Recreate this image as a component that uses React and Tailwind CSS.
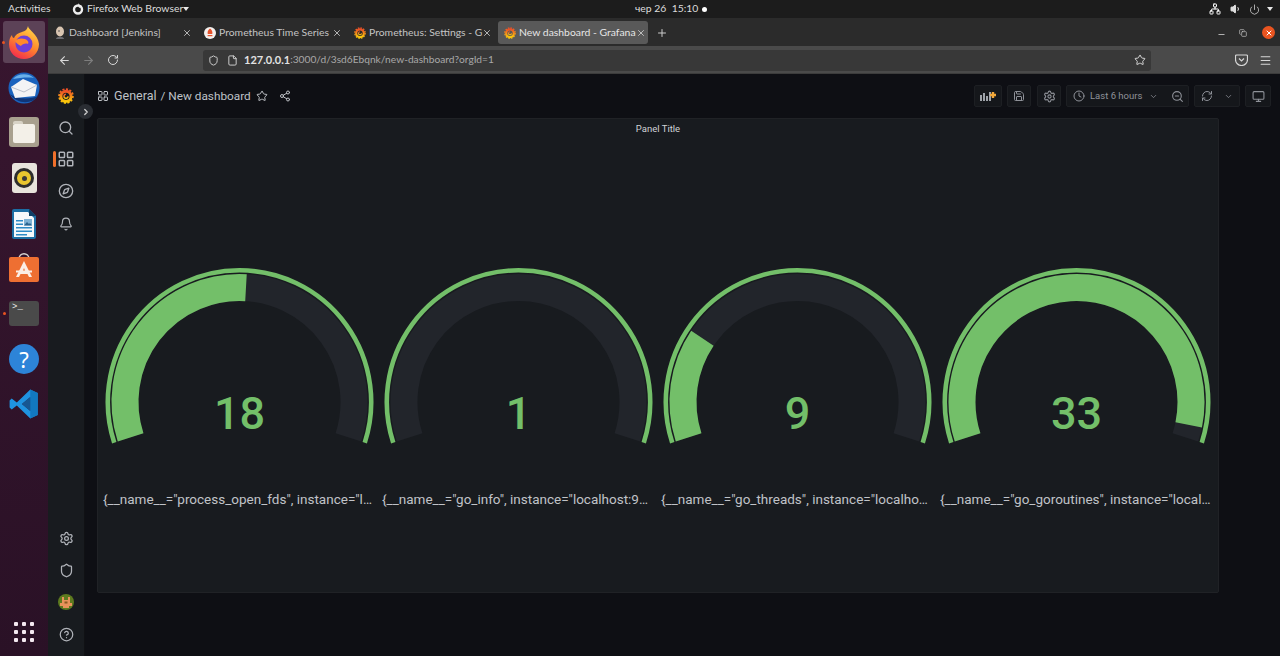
import {
  ArrowLeft, ArrowRight, RotateCw, Shield, File, Star, Menu, X, Plus, Minus, Search, LayoutGrid,
  Compass, Bell, Settings, CircleHelp, Share2, Save, Clock, ChevronDown, ZoomOut, RefreshCw,
  Monitor, ChevronRight, Network, Volume1, Power, Copy,
} from 'lucide-react';

const gauges = [
  { value: '18', pct: 0.515, label: '{__name__="process_open_fds", instance="localhost:9090", job="prometheus"}' },
  { value: '1', pct: 0, label: '{__name__="go_info", instance="localhost:9090", job="prometheus", version="go1.16"}' },
  { value: '9', pct: 0.24, label: '{__name__="go_threads", instance="localhost:9090", job="prometheus"}' },
  { value: '33', pct: 0.97, label: '{__name__="go_goroutines", instance="localhost:9090", job="prometheus"}' },
];

function arc(cx, cy, r, from, to) {
  const rad = (a) => (a * Math.PI) / 180;
  const x1 = cx + r * Math.cos(rad(from));
  const y1 = cy - r * Math.sin(rad(from));
  const x2 = cx + r * Math.cos(rad(to));
  const y2 = cy - r * Math.sin(rad(to));
  const large = from - to > 180 ? 1 : 0;
  return `M${x1} ${y1}A${r} ${r} 0 ${large} 1 ${x2} ${y2}`;
}

function Gauge({ value, pct, label }) {
  const start = 198;
  const end = -18;
  const cut = start - (start - end) * pct;
  return (
    <div className="w-[279px] flex flex-col items-center">
      <svg width="279" height="190" viewBox="0 0 279 190">
        <path d={arc(139.5, 140, 114.5, start, end)} fill="none" stroke="#22252b" strokeWidth="27" />
        {pct > 0 && <path d={arc(139.5, 140, 114.5, start, cut)} fill="none" stroke="#73BF69" strokeWidth="27" />}
        <path d={arc(139.5, 140, 131.7, start, end)} fill="none" stroke="#73BF69" strokeWidth="4.6" />
        <text x="139.5" y="167" textAnchor="middle" fill="#73BF69" fontSize="45" fontWeight="500" style={{ fontFamily: 'Roboto, sans-serif' }}>{value}</text>
      </svg>
      <div className="mt-[37px] w-[273px] truncate text-left text-[13.5px] leading-5 text-[#c0c3c8]">{label}</div>
    </div>
  );
}

function GrafanaLogo({ size = 16, id = 'gf' }) {
  return (
    <svg width={size} height={size} viewBox="0 0 24 24" className="shrink-0">
      <defs>
        <linearGradient id={id} x1="0" y1="0" x2="0" y2="1">
          <stop offset="0" stopColor="#ee4f27" />
          <stop offset="1" stopColor="#fbca0a" />
        </linearGradient>
      </defs>
      <circle cx="12" cy="12.5" r="7.6" fill="none" stroke={`url(#${id})`} strokeWidth="4.4" />
      <circle cx="12" cy="12" r="10.4" fill="none" stroke={`url(#${id})`} strokeWidth="2.6" strokeDasharray="3.2 2.2" />
      <path d="M12 9.5a3 3 0 1 0 3 3" fill="none" stroke={`url(#${id})`} strokeWidth="2.2" />
    </svg>
  );
}

function JenkinsIcon() {
  return (
    <svg width="12" height="14" viewBox="0 0 12 14" className="shrink-0">
      <ellipse cx="6" cy="5.5" rx="4" ry="5" fill="#d8c4b0" />
      <path d="M2 13c0-3 8-3 8 0z" fill="#6b6b70" />
      <circle cx="5" cy="5" r=".8" fill="#444" />
    </svg>
  );
}

function PrometheusIcon() {
  return (
    <svg width="12" height="12" viewBox="0 0 12 12" className="shrink-0">
      <circle cx="6" cy="6" r="6" fill="#f4f0ee" />
      <path d="M6 1.5c2.6 1.8 2.6 4.4 2.2 5.6H3.8C3.4 5.9 3.4 3.3 6 1.5z" fill="#e6522c" />
      <rect x="3.6" y="8" width="4.8" height="1.2" fill="#e6522c" />
    </svg>
  );
}

function Tab({ icon, title, active }) {
  return (
    <div className={`w-[150px] h-[23px] shrink-0 flex items-center pl-[5px] pr-[6px] rounded-[3px] ${active ? 'bg-[#595959] text-[#e6e6e6]' : 'text-[#c4c4c4]'}`}>
      <div className="w-[14px] flex justify-center shrink-0">{icon}</div>
      <span className="ml-[2px] flex-1 whitespace-nowrap text-[10.4px]">{title}</span>
      <X size={10} className="text-[#d0d0d0] shrink-0" />
    </div>
  );
}

function FirefoxIcon() {
  return (
    <svg width="30" height="33" viewBox="0 0 30 33">
      <defs>
        <linearGradient id="ffo" x1="0.75" y1="0" x2="0.25" y2="1">
          <stop offset="0" stopColor="#ffd84a" />
          <stop offset="0.5" stopColor="#ff8a2b" />
          <stop offset="1" stopColor="#f2274f" />
        </linearGradient>
      </defs>
      <path d="M19 0c0 4 10 8 11 18 0 9-7 15-15 15S0 27 0 18c0-4 1-7 3-9 0 2 1 3 2 3 1-3 4-5 8-6 3-1 5-2 6-6z" fill="url(#ffo)" />
      <circle cx="15" cy="18" r="8.5" fill="#6d3fd8" />
      <path d="M6 15c3-3 7-3 10-2 3 1 4 3 3 5-2-1-6 0-7 2-2-1-4-2-6-5z" fill="#ff8a2b" />
    </svg>
  );
}

function ThunderbirdIcon() {
  return (
    <svg width="32" height="32" viewBox="0 0 32 32">
      <circle cx="16" cy="16" r="15.5" fill="#1a62bd" />
      <path d="M5 7c4-5 14-7 21-1-6-1-15 0-21 1z" fill="#6ab0ea" />
      <path d="M2 22c6 10 22 11 28 2-6 3-21 4-28-2z" fill="#0f3578" />
      <path d="M3 15L15 7l14 6-2 11-20 2z" fill="#f3f3f5" />
      <path d="M3 15l13 5 13-7" fill="none" stroke="#bcc1cc" strokeWidth="1" />
    </svg>
  );
}

function FilesIcon() {
  return (
    <div className="w-[30px] h-[30px] rounded-[3px] bg-[#a8a08e] p-[4px] flex flex-col">
      <div className="w-[10px] h-[3px] rounded-t-[2px] bg-[#d8d3c6]" />
      <div className="flex-1 rounded-[2px] bg-[#f3f0e8]" />
    </div>
  );
}

function RhythmboxIcon() {
  return (
    <div className="w-[25px] h-[30px] rounded-[3px] bg-[#e8e4dc] flex items-center justify-center">
      <div className="w-[20px] h-[20px] rounded-full bg-[#2d2d2d] flex items-center justify-center">
        <div className="w-[14px] h-[14px] rounded-full bg-[#e9c62f] flex items-center justify-center">
          <div className="w-[5px] h-[5px] rounded-full bg-[#3a3a3a]" />
        </div>
      </div>
    </div>
  );
}

function WriterIcon() {
  return (
    <svg width="24" height="30" viewBox="0 0 24 30">
      <path d="M0 2a2 2 0 0 1 2-2h15l7 7v21a2 2 0 0 1-2 2H2a2 2 0 0 1-2-2z" fill="#1c6ea4" />
      <path d="M2 3h14l6 6v19H2z" fill="#f5f8fb" />
      <path d="M17 0l7 7h-7z" fill="#0e3f66" />
      <rect x="4" y="11" width="7" height="1.5" fill="#2d8ac6" />
      <rect x="4" y="14.5" width="7" height="1.5" fill="#2d8ac6" />
      <rect x="4" y="18" width="16" height="1.5" fill="#2d8ac6" />
      <rect x="4" y="21.5" width="16" height="1.5" fill="#2d8ac6" />
      <rect x="4" y="25" width="11" height="1.5" fill="#2d8ac6" />
      <rect x="12" y="10" width="8" height="6.5" fill="#7fb2d4" />
      <path d="M12 16.5l3-3.5 2 2 1-1 2 2.5z" fill="#2b648f" />
    </svg>
  );
}

function SoftwareIcon() {
  return (
    <svg width="30" height="30" viewBox="0 0 30 30">
      <path d="M10 6c0-7 10-7 10 0" fill="none" stroke="#d7d2cf" strokeWidth="1.4" />
      <rect y="4" width="30" height="25" rx="2" fill="#ee6f32" />
      <path d="M15 8l8 16h-3l-1.5-3h-7L10 24H7z M13.8 18h2.4L15 15z" fill="#fbeee6" fillRule="evenodd" />
      <rect x="7" y="17.5" width="16" height="2" fill="#fbeee6" />
    </svg>
  );
}

function TerminalIcon() {
  return (
    <div className="w-[30px] h-[25px] rounded-[3px] bg-[#4a4a4a] px-[3px] pt-[1px] text-[9px] leading-[10px] text-[#eeeeee] font-['Liberation_Mono',monospace]">
      &gt;_
    </div>
  );
}

function HelpIcon() {
  return (
    <div className="w-[30px] h-[30px] rounded-full bg-[#2d84d8] flex items-center justify-center text-[22px] leading-none text-white font-['Noto_Sans',sans-serif]">
      ?
    </div>
  );
}

function VscodeIcon() {
  return (
    <svg width="30" height="30" viewBox="0 0 100 100">
      <path d="M71 2L96 13V87L71 98L26 55L9 68L2 62V38L9 32L26 45z M71 27L43 50L71 73z" fill="#1f93e0" fillRule="evenodd" />
      <path d="M71 2L96 13V87L71 98z M71 27V73L43 50z" fill="#0f6fb5" fillRule="evenodd" opacity="0.75" />
    </svg>
  );
}

function PocketIcon() {
  return (
    <svg width="13" height="12" viewBox="0 0 13 12" className="ml-[84px] shrink-0">
      <path d="M1.5 1h10a1 1 0 0 1 1 1v3.5a6 6 0 0 1-12 0V2a1 1 0 0 1 1-1z" fill="none" stroke="#d8d8d8" strokeWidth="1.2" />
      <path d="M4 4.5l2.5 2.4L9 4.5" fill="none" stroke="#d8d8d8" strokeWidth="1.2" />
    </svg>
  );
}

function Avatar() {
  return (
    <svg width="16" height="16" viewBox="0 0 16 16">
      <circle cx="8" cy="8" r="8" fill="#5d7a1f" />
      <path d="M4 3h2v3h4V3h2v6h2v3h-3v2H5v-2H2V9h2z" fill="#e8925a" />
      <rect x="6.5" y="7.5" width="3" height="2" fill="#8a5a20" />
    </svg>
  );
}

function Dock() {
  return (
    <div className="w-[48px] shrink-0 flex flex-col items-center bg-gradient-to-b from-[#38162f] to-[#2a1126] pt-[3px]">
      <div className="relative w-[42px] h-[42px] rounded-[3px] bg-[#5c4257] flex items-center justify-center">
        <span className="absolute left-[-1px] top-[20px] w-[3px] h-[3px] rounded-full bg-[#e95420]" />
        <FirefoxIcon />
      </div>
      <div className="mt-[9px] h-[32px] flex items-center"><ThunderbirdIcon /></div>
      <div className="mt-[12px] h-[32px] flex items-center"><FilesIcon /></div>
      <div className="mt-[14px] h-[32px] flex items-center"><RhythmboxIcon /></div>
      <div className="mt-[14px] h-[32px] flex items-center"><WriterIcon /></div>
      <div className="mt-[12px] h-[32px] flex items-center"><SoftwareIcon /></div>
      <div className="relative mt-[13px] h-[32px] w-full flex items-center justify-center">
        <span className="absolute left-[3px] top-[15px] w-[3px] h-[3px] rounded-full bg-[#e95420]" />
        <TerminalIcon />
      </div>
      <div className="mt-[14px] h-[32px] flex items-center"><HelpIcon /></div>
      <div className="mt-[13px] h-[32px] flex items-center"><VscodeIcon /></div>
      <div className="mt-auto mb-[14px] grid grid-cols-3 gap-[4px]">
        {Array.from({ length: 9 }).map((_, i) => (
          <div key={i} className="w-[4px] h-[4px] rounded-[1px] bg-[#f4e8f0]" />
        ))}
      </div>
    </div>
  );
}

function ToolBtn({ children, className = '' }) {
  return (
    <div className={`h-[22px] shrink-0 flex items-center justify-center rounded-[2px] bg-[#15171b] border border-[#1d1f23] text-[#8f9299] ${className}`}>
      {children}
    </div>
  );
}

function SideIcon({ children, mt, active }) {
  return (
    <div className="relative h-[16px] flex items-center justify-center text-[#b0b3b9]" style={{ marginTop: mt }}>
      {active && <span className="absolute left-[5px] top-0 w-[3px] h-[16px] rounded-[2px] bg-[#f0702b]" />}
      {children}
    </div>
  );
}

export default function App() {
  return (
    <div className="w-[1280px] h-[656px] flex flex-col overflow-hidden bg-[#0e0f14] font-['Lato',sans-serif]">
      {/* ubuntu top bar */}
      <div className="h-[18px] shrink-0 bg-[#1c1c1c] flex items-center whitespace-nowrap text-[10.4px] text-[#dcdcdc]">
        <span className="ml-[8px] w-[41px] shrink-0">Activities</span>
        <svg width="12" height="12" viewBox="0 0 12 12" className="ml-[23px] shrink-0">
          <circle cx="6" cy="6.5" r="4" fill="none" stroke="#eee" strokeWidth="2.4" />
          <path d="M6 0c1 2 3 2 4 3l-3 2z" fill="#eee" />
        </svg>
        <span className="ml-[3px] w-[93px] shrink-0">Firefox Web Browser</span>
        <span className="ml-[3px] w-0 h-0 shrink-0 border-x-[3.5px] border-x-transparent border-t-[4px] border-t-[#e8e8e8]" />
        <span className="ml-[446px] w-[58px] shrink-0">чер 26&nbsp;&nbsp;15:10</span>
        <span className="ml-[9px] w-[5px] h-[5px] shrink-0 rounded-full bg-white" />
        <Network size={12} className="ml-[502px] shrink-0 text-white" />
        <Volume1 size={12} className="ml-[9px] shrink-0 text-[#dddddd] fill-[#dddddd]" />
        <Power size={11} className="ml-[7px] shrink-0 text-[#bbbbbb]" />
        <span className="ml-[7px] w-0 h-0 shrink-0 border-x-[3.5px] border-x-transparent border-t-[4px] border-t-[#e8e8e8]" />
      </div>

      <div className="flex-1 flex min-h-0">
        <Dock />
        <div className="flex-1 flex flex-col min-w-0">
          {/* firefox tabs */}
          <div className="h-[28px] shrink-0 bg-[#2b2b2b] flex items-center pt-[1px]">
            <Tab icon={<JenkinsIcon />} title="Dashboard [Jenkins]" />
            <Tab icon={<PrometheusIcon />} title="Prometheus Time Series" />
            <Tab icon={<GrafanaLogo size={12} id="gf1" />} title="Prometheus: Settings - G" />
            <Tab icon={<GrafanaLogo size={12} id="gf2" />} title="New dashboard - Grafana" active />
            <Plus size={12} className="ml-[8px] text-[#cccccc]" />
            <Minus size={9} className="ml-auto mt-[3px] mr-[-2px] text-[#dddddd]" />
            <Copy size={8} className="ml-[15px] text-[#cccccc]" />
            <div className="ml-[15px] mr-[5px] w-[13px] h-[13px] rounded-full bg-[#e95420] flex items-center justify-center">
              <X size={8} strokeWidth={3} className="text-white" />
            </div>
          </div>

          {/* firefox toolbar */}
          <div className="h-[28px] shrink-0 bg-[#4a4a4a] flex items-center pt-[1px] border-b border-[#3c3c3c] text-[#d8d8d8]">
            <ArrowLeft size={13} className="ml-[10px]" />
            <ArrowRight size={13} className="ml-[11px] text-[#7e7e7e]" />
            <RotateCw size={12} className="ml-[12px]" />
            <div className="ml-[84px] w-[948px] h-[21px] rounded-[3px] bg-[#383838] flex items-center">
              <Shield size={11} className="ml-[5px]" />
              <File size={11} className="ml-[8px]" />
              <span className="ml-[6px] text-[11px] font-bold text-[#e2e2e2]">127.0.0.1</span>
              <span className="text-[10.2px] text-[#a8a8a8]">:3000/d/3sd6Ebqnk/new-dashboard?orgId=1</span>
              <Star size={12} className="ml-auto mr-[5px]" />
            </div>
            <PocketIcon />
            <Menu size={13} className="ml-[11px]" />
          </div>

          {/* grafana */}
          <div className="relative flex-1 flex min-h-0">
            <div className="w-[37px] shrink-0 bg-[#181b1f] flex flex-col border-r border-[#101114]">
              <div className="mt-[14px] flex justify-center"><GrafanaLogo size={16} id="gf3" /></div>
              <SideIcon mt={16}><Search size={16} /></SideIcon>
              <SideIcon mt={15} active><LayoutGrid size={18} /></SideIcon>
              <SideIcon mt={16}><Compass size={16} /></SideIcon>
              <SideIcon mt={17}><Bell size={14} /></SideIcon>
              <div className="mt-auto" />
              <SideIcon><Settings size={15} /></SideIcon>
              <SideIcon mt={16}><Shield size={15} /></SideIcon>
              <div className="mt-[16px] flex justify-center"><Avatar /></div>
              <SideIcon mt={16}><CircleHelp size={15} /></SideIcon>
              <div className="h-[14px]" />
            </div>
            <div className="absolute left-[30px] top-[30px] w-[15px] h-[15px] rounded-full bg-[#2a2d33] flex items-center justify-center text-[#d0d0d0]">
              <ChevronRight size={10} strokeWidth={3} />
            </div>

            <div className="flex-1 min-w-0 pl-[12px] font-['Roboto',sans-serif]">
              <div className="h-[22px] mt-[11px] flex items-center text-[#bfc2c7]">
                <LayoutGrid size={12} />
                <span className="ml-[5px] mt-[1px] text-[12.5px]">General</span>
                <span className="ml-[4px] mt-[1px] text-[11.8px]">/ New dashboard</span>
                <Star size={12} className="ml-[5px]" />
                <Share2 size={12} className="ml-[11px]" />
                <ToolBtn className="ml-auto w-[28px]">
                  <svg width="17" height="10" viewBox="0 0 17 10">
                    <path d="M0 4h2v6H0zM3 2h2v8H3zM6 5h2v5H6zM9 1h2v9H9z" fill="#9fa3a9" />
                    <path d="M13 1v6M10 4h6" stroke="#f2a83b" strokeWidth="2.4" />
                  </svg>
                </ToolBtn>
                <ToolBtn className="ml-[5px] w-[24px]"><Save size={12} /></ToolBtn>
                <ToolBtn className="ml-[6px] w-[24px]"><Settings size={13} /></ToolBtn>
                <ToolBtn className="ml-[5px] w-[123px] text-[9.5px] justify-start pl-[6px] whitespace-nowrap">
                  <Clock size={12} />
                  <span className="ml-[5px] w-[52px]">Last 6 hours</span>
                  <ChevronDown size={9} className="ml-[7px]" />
                  <ZoomOut size={13} className="ml-[13px]" />
                </ToolBtn>
                <ToolBtn className="ml-[5px] w-[46px] justify-start pl-[6px]">
                  <RefreshCw size={12} />
                  <ChevronDown size={9} className="ml-[11px]" />
                </ToolBtn>
                <ToolBtn className="ml-[5px] mr-[9px] w-[26px]"><Monitor size={13} /></ToolBtn>
              </div>

              {/* panel */}
              <div className="mt-[11px] w-[1122px] h-[475px] rounded-[2px] bg-[#181b1f] border border-[#202226]">
                <div className="h-[20px] flex items-center justify-center text-[9.5px] font-normal text-[#d0d2d6]">Panel Title</div>
                <div className="mt-[123px] flex justify-center">
                  {gauges.map((g) => (
                    <Gauge key={g.value} {...g} />
                  ))}
                </div>
              </div>
            </div>
          </div>
        </div>
      </div>
    </div>
  );
}
